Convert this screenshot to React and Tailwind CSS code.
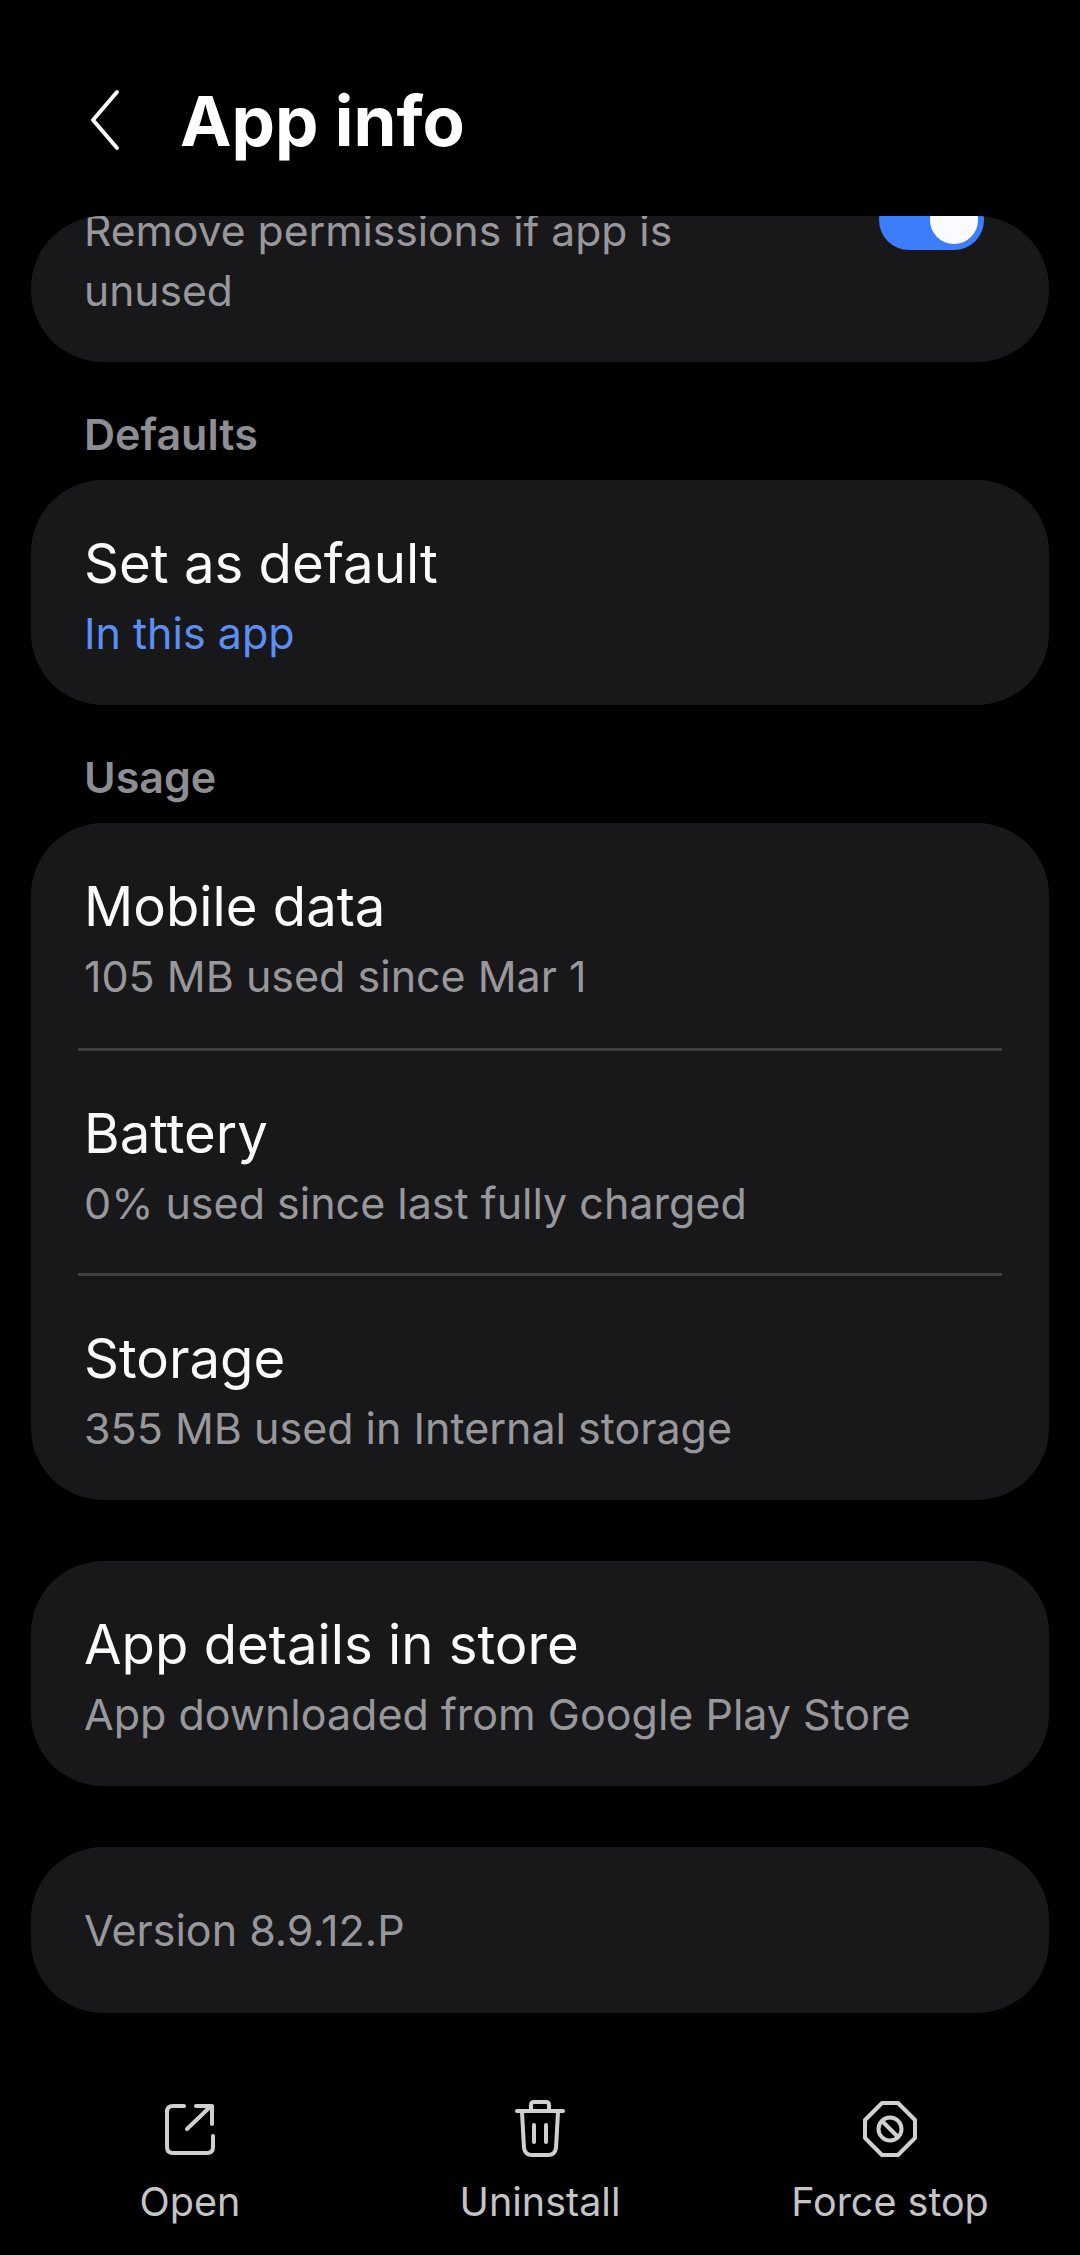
const FONT = "font-['Inter','Roboto',sans-serif]"

function Row({ title, sub, subClass = 'text-[#98989c]', divider, height = 'h-[225px]' }) {
  return (
    <div className={`relative ${height} px-[53px] pt-[50px]`}>
      <div className="text-[54.5px] leading-[66px] text-[#fafafa]">{title}</div>
      <div className={`text-[43px] leading-[58px] mt-[8px] ${subClass}`}>{sub}</div>
      {divider && <div className="absolute left-[47px] right-[47px] -bottom-px h-[3px] bg-[#3f3f41]" />}
    </div>
  )
}

function SectionLabel({ children, className = '' }) {
  return <div className={`pl-[53px] text-[43px] leading-[50px] font-semibold text-[#8e8e92] ${className}`}>{children}</div>
}

function BackIcon() {
  return (
    <svg width="40" height="64" viewBox="0 0 40 64" fill="none" stroke="#fafafa" strokeWidth="4" strokeLinecap="round" strokeLinejoin="round">
      <path d="M32 4 L8 32 L32 60" />
    </svg>
  )
}

function OpenIcon() {
  return (
    <svg width="56" height="56" viewBox="0 0 56 56" fill="none" stroke="#d0d0d2" strokeWidth="4" strokeLinecap="round" strokeLinejoin="round">
      <path d="M22 5 H11 Q5 5 5 11 V46 Q5 52 11 52 H45 Q51 52 51 46 V35" />
      <path d="M25 28 L49 5 M34 5 H50 V23" />
    </svg>
  )
}

function TrashIcon() {
  return (
    <svg width="56" height="60" viewBox="0 0 56 60" fill="none" stroke="#d0d0d2" strokeWidth="4" strokeLinecap="round" strokeLinejoin="round">
      <path d="M5 12 H51" />
      <path d="M19 11 V6 Q19 3 22 3 H34 Q37 3 37 6 V11" />
      <path d="M10 13 L12 49 Q13 56 20 56 H36 Q43 56 44 49 L46 13" />
      <path d="M22 26 V43 M34 26 V43" />
    </svg>
  )
}

function StopIcon() {
  return (
    <svg width="56" height="60" viewBox="0 0 56 60" fill="none" stroke="#d0d0d2" strokeWidth="4" strokeLinecap="round" strokeLinejoin="round">
      <path d="M20 4 H36 L53 21 V39 L36 56 H20 L3 39 V21 Z" />
      <circle cx="28" cy="30" r="11.5" />
      <path d="M20 22 L36 38" />
    </svg>
  )
}

function Action({ icon, label }) {
  return (
    <div className="flex flex-col items-center pt-[10px]">
      <div className="h-[60px] flex items-center justify-center">{icon}</div>
      <div className="mt-[18px] text-[39.5px] leading-[50px] text-[#c4c4c6]">{label}</div>
    </div>
  )
}

export default function App() {
  return (
    <div className={`w-[1080px] h-[2255px] bg-black flex flex-col overflow-hidden ${FONT}`}>
      <header className="h-[216px] shrink-0 flex items-start pl-[85px] pt-[88px]">
        <BackIcon />
        <h1 className="ml-[55px] -mt-[3px] text-[69px] leading-[72px] font-bold text-white">App info</h1>
      </header>

      <main className="flex-1 px-[31px]">
        <div className="relative h-[146px] rounded-[72px] bg-[#18181a] overflow-hidden">
          <div className="absolute left-[53px] top-[-15px] w-[640px] text-[42.6px] leading-[60px] text-[#98989c]">
            Remove permissions if app is unused
          </div>
          <div className="absolute left-[848px] top-[-26px] w-[105px] h-[60px] rounded-full bg-[#3b7dfb]">
            <div className="absolute right-[6px] top-[6px] w-[48px] h-[48px] rounded-full bg-[#fafaff]" />
          </div>
        </div>

        <SectionLabel className="mt-[47px]">Defaults</SectionLabel>
        <div className="mt-[21px] rounded-[72px] bg-[#18181a]">
          <Row title="Set as default" sub="In this app" subClass="text-[#5b8ff5]" />
        </div>

        <SectionLabel className="mt-[47px]">Usage</SectionLabel>
        <div className="mt-[21px] rounded-[72px] bg-[#18181a]">
          <Row title="Mobile data" sub="105 MB used since Mar 1" divider height="h-[227px]" />
          <Row title="Battery" sub="0% used since last fully charged" divider />
          <Row title="Storage" sub="355 MB used in Internal storage" />
        </div>

        <div className="mt-[61px] rounded-[72px] bg-[#18181a]">
          <Row title="App details in store" sub="App downloaded from Google Play Store" />
        </div>

        <div className="mt-[61px] h-[166px] rounded-[72px] bg-[#18181a] px-[53px] flex items-center text-[43px] text-[#98989c]">
          Version 8.9.12.P
        </div>
      </main>

      <footer className="h-[166px] shrink-0 grid grid-cols-3 px-[15px]">
        <Action icon={<OpenIcon />} label="Open" />
        <Action icon={<TrashIcon />} label="Uninstall" />
        <Action icon={<StopIcon />} label="Force stop" />
      </footer>
    </div>
  )
}
